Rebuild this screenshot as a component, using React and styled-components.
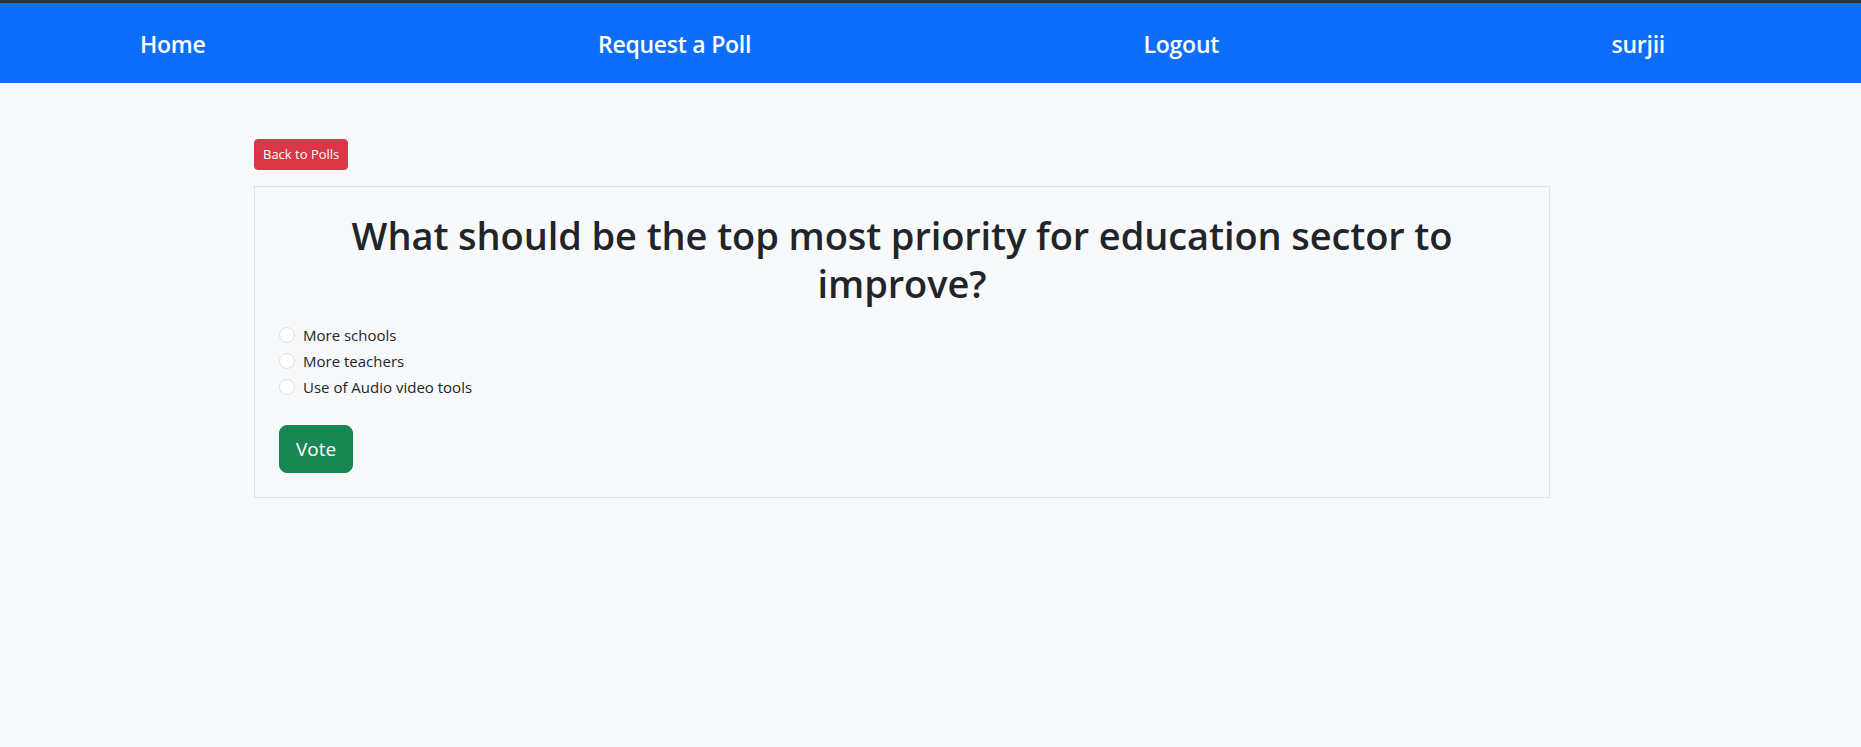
import React, { useState } from "react";
import styled, { createGlobalStyle } from "styled-components";

const GlobalStyle = createGlobalStyle`
  html, body {
    margin: 0;
    padding: 0;
    background: #f8f9fa;
    color: #212529;
    font-family: "Open Sans", "Noto Sans", "Liberation Sans", sans-serif;
  }
  * { box-sizing: border-box; }
`;

const TopStrip = styled.div`
  height: 3px;
  background: #333333;
`;

const NavBar = styled.nav`
  height: 80px;
  background: #0d6efd;
  display: flex;
  align-items: center;
  justify-content: space-between;
  padding: 2px 196px 0 140px;
`;

const NavLink = styled.a`
  color: #ffffff;
  font-size: 23px;
  font-weight: 600;
  letter-spacing: -0.25px;
  text-decoration: none;
  line-height: 32px;
  cursor: pointer;
`;

const Main = styled.main`
  padding: 56px 0 0 254px;
`;

const BackButton = styled.button`
  display: block;
  font-family: inherit;
  font-size: 13px;
  line-height: 21px;
  padding: 4px 8px;
  color: #ffffff;
  background: #dc3545;
  border: 1px solid #dc3545;
  border-radius: 4px;
  margin-bottom: 16px;
  cursor: pointer;
`;

const Card = styled.section`
  width: 1296px;
  border: 1px solid #dee2e6;
  padding: 24px;
`;

const Question = styled.h1`
  margin: 0 0 16px;
  font-size: 38px;
  line-height: 48px;
  font-weight: 600;
  letter-spacing: -0.1px;
  text-align: center;
  color: #212529;
`;

const OptionRow = styled.label`
  display: flex;
  align-items: center;
  gap: 8px;
  height: 24px;
  margin-bottom: 2px;
  font-size: 15px;
  cursor: pointer;
`;

const Radio = styled.input.attrs({ type: "radio" })`
  appearance: none;
  margin: 0;
  width: 16px;
  height: 16px;
  border-radius: 50%;
  border: 1px solid #dee2e6;
  background: #ffffff;
  flex: none;
  &:checked {
    border: 5px solid #0d6efd;
  }
`;

const VoteButton = styled.button`
  display: block;
  margin-top: 26px;
  font-family: inherit;
  font-size: 19px;
  line-height: 30px;
  padding: 8px 16px;
  color: #ffffff;
  background: #198754;
  border: 1px solid #198754;
  border-radius: 8px;
  cursor: pointer;
`;

const options = ["More schools", "More teachers", "Use of Audio video tools"];

export default function App() {
  const [choice, setChoice] = useState(null);
  return (
    <>
      <GlobalStyle />
      <TopStrip />
      <NavBar>
        <NavLink>Home</NavLink>
        <NavLink>Request a Poll</NavLink>
        <NavLink>Logout</NavLink>
        <NavLink>surjii</NavLink>
      </NavBar>
      <Main>
        <BackButton>Back to Polls</BackButton>
        <Card>
          <Question>
            What should be the top most priority for education sector to improve?
          </Question>
          {options.map((o, i) => (
            <OptionRow key={o}>
              <Radio
                name="poll"
                checked={choice === i}
                onChange={() => setChoice(i)}
              />
              {o}
            </OptionRow>
          ))}
          <VoteButton>Vote</VoteButton>
        </Card>
      </Main>
    </>
  );
}
